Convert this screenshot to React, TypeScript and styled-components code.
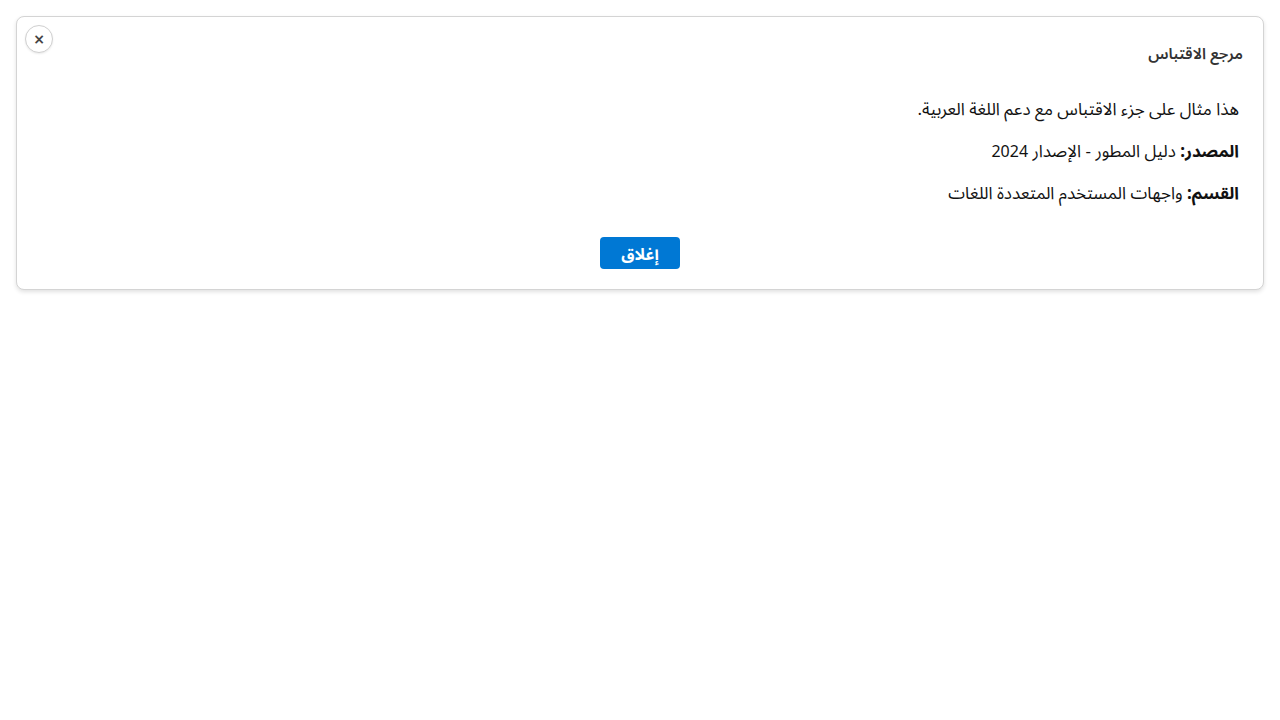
import React from "react";
import styled, { createGlobalStyle } from "styled-components";

const FONT = `"Noto Sans", "Noto Sans Arabic", "DejaVu Sans", sans-serif`;

const Global = createGlobalStyle`
  html, body { margin: 0; padding: 0; background: #fff; }
  body { font-family: ${FONT}; }
`;

const Page = styled.div`
  padding: 16px;
`;

const Card = styled.div`
  position: relative;
  direction: rtl;
  background: #fff;
  border: 1px solid #d4d4d4;
  border-radius: 8px;
  box-shadow: 0 2px 4px rgba(0, 0, 0, 0.12);
`;

const CloseButton = styled.button`
  position: absolute;
  top: 8px;
  left: 8px;
  width: 28px;
  height: 28px;
  border-radius: 50%;
  border: 1px solid #d0d0d0;
  background: #fff;
  color: #444;
  font-family: "DejaVu Sans", sans-serif;
  font-size: 14px;
  font-weight: bold;
  line-height: 1;
  padding: 0;
  display: flex;
  align-items: center;
  justify-content: center;
  box-shadow: 0 1px 2px rgba(0, 0, 0, 0.08);
  cursor: pointer;
`;

const Header = styled.div`
  padding: 24px 20px 12px;
`;

const Title = styled.h2`
  margin: 0;
  font-size: 15.5px;
  font-weight: 600;
  color: #333;
  line-height: 24px;
`;

const Body = styled.div`
  padding: 3px 24px 0;
`;

const Para = styled.p`
  margin: 16px 0;
  font-size: 17px;
  line-height: 26px;
  color: #111;
`;

const Label = styled.strong`
  font-weight: bold;
`;

const Year = styled.span`
  font-size: 16px;
`;

const Footer = styled.div`
  display: flex;
  justify-content: center;
  padding: 15px 0 20px;
`;

const PrimaryButton = styled.button`
  width: 80px;
  height: 32px;
  border: none;
  border-radius: 4px;
  background: #0078d4;
  color: #fff;
  font-family: ${FONT};
  font-size: 16px;
  font-weight: bold;
  cursor: pointer;
`;

export default function App() {
  return (
    <>
      <Global />
      <Page>
        <Card>
          <CloseButton aria-label="إغلاق">×</CloseButton>
          <Header>
            <Title>مرجع الاقتباس</Title>
          </Header>
          <Body>
            <Para>هذا مثال على جزء الاقتباس مع دعم اللغة العربية.</Para>
            <Para>
              <Label>المصدر:</Label> دليل المطور - الإصدار <Year>2024</Year>
            </Para>
            <Para>
              <Label>القسم:</Label> واجهات المستخدم المتعددة اللغات
            </Para>
          </Body>
          <Footer>
            <PrimaryButton>إغلاق</PrimaryButton>
          </Footer>
        </Card>
      </Page>
    </>
  );
}
